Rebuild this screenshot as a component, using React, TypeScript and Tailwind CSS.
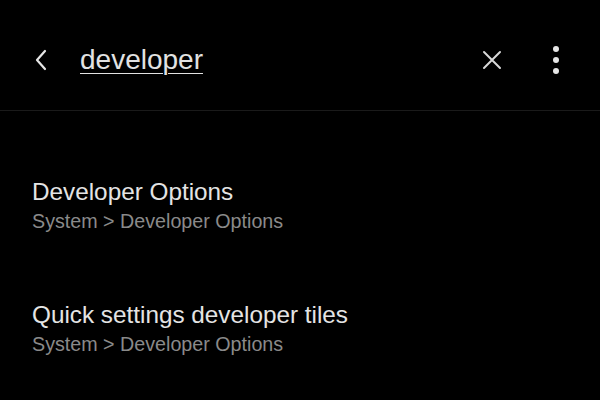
import React from "react";

function Item({ title, sub }: { title: string; sub: string }) {
  return (
    <div className="py-[34px] pl-[32px]">
      <div className="text-[24.3px] leading-[28px] text-[#e4e4e4]">{title}</div>
      <div className="mt-[3px] text-[19.7px] leading-[24px] text-[#8a8a8a]">{sub}</div>
    </div>
  );
}

export default function App() {
  return (
    <div
      className="w-[600px] h-[400px] bg-black overflow-hidden"
      style={{ fontFamily: '"Liberation Sans", Arial, sans-serif' }}
    >
      <div className="h-[111px] pt-[10px] border-b border-[#1a1a1a] flex items-center">
        <div className="w-[80px] flex items-center pl-[34px]">
          <svg width="14" height="22" viewBox="0 0 14 22" fill="none">
            <path d="M11 2 L3 11 L11 20" stroke="#e6e6e6" strokeWidth="2.2" strokeLinecap="round" strokeLinejoin="round" />
          </svg>
        </div>
        <div className="flex-1 text-[28px] leading-[34px] text-[#e2e2e2] underline decoration-1 underline-offset-[4px]">
          developer
        </div>
        <div className="w-[40px] flex justify-center mr-[34px]">
          <svg width="20" height="20" viewBox="0 0 20 20" fill="none">
            <path d="M2 2 L18 18 M18 2 L2 18" stroke="#d8d8d8" strokeWidth="2" strokeLinecap="round" />
          </svg>
        </div>
        <div className="w-[20px] flex flex-col items-center gap-[5px] mr-[34px]">
          <div className="w-[6px] h-[6px] rounded-full bg-[#e6e6e6]" />
          <div className="w-[6px] h-[6px] rounded-full bg-[#e6e6e6]" />
          <div className="w-[6px] h-[6px] rounded-full bg-[#e6e6e6]" />
        </div>
      </div>
      <div className="pt-[33px]">
        <Item title="Developer Options" sub="System > Developer Options" />
        <Item title="Quick settings developer tiles" sub="System > Developer Options" />
      </div>
    </div>
  );
}
